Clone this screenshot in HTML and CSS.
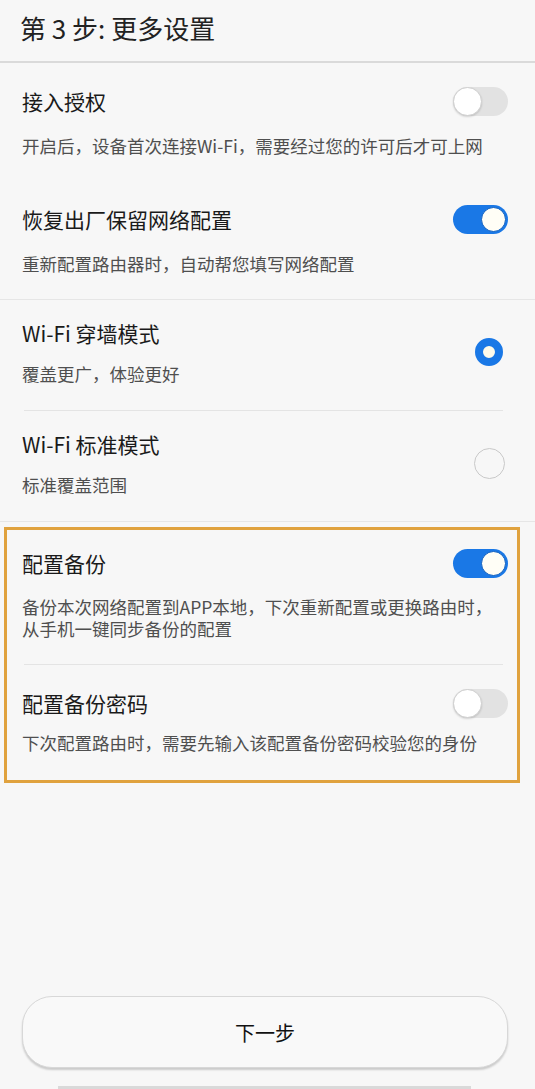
FILE: index.html
```html
<!DOCTYPE html>
<html lang="zh-CN">
<head>
<meta charset="utf-8">
<title>第 3 步: 更多设置</title>
<link rel="stylesheet" href="styles.css">
</head>
<body>
<div class="page">
  <header class="header">
    <h1>第 3 步: 更多设置</h1>
  </header>

  <section class="group">
    <div class="row">
      <div class="title">接入授权</div>
      <div class="ctrl"><span class="switch off"><span class="knob"></span></span></div>
      <div class="desc">开启后，设备首次连接Wi-Fi，需要经过您的许可后才可上网</div>
    </div>
    <div class="row">
      <div class="title">恢复出厂保留网络配置</div>
      <div class="ctrl"><span class="switch on"><span class="knob"></span></span></div>
      <div class="desc">重新配置路由器时，自动帮您填写网络配置</div>
    </div>
  </section>

  <section class="group radios">
    <div class="row radio-row">
      <div class="title">Wi-Fi 穿墙模式</div>
      <div class="ctrl"><span class="radio checked"></span></div>
      <div class="desc">覆盖更广，体验更好</div>
    </div>
    <div class="sep"></div>
    <div class="row radio-row">
      <div class="title">Wi-Fi 标准模式</div>
      <div class="ctrl"><span class="radio"></span></div>
      <div class="desc">标准覆盖范围</div>
    </div>
  </section>

  <section class="box">
    <div class="row">
      <div class="title">配置备份</div>
      <div class="ctrl"><span class="switch on"><span class="knob"></span></span></div>
      <div class="desc">备份本次网络配置到APP本地，下次重新配置或更换路由时，<br>从手机一键同步备份的配置</div>
    </div>
    <div class="sep"></div>
    <div class="row">
      <div class="title">配置备份密码</div>
      <div class="ctrl"><span class="switch off"><span class="knob"></span></span></div>
      <div class="desc">下次配置路由时，需要先输入该配置备份密码校验您的身份</div>
    </div>
  </section>

  <footer class="footer">
    <button class="next" type="button">下一步</button>
    <div class="navhint"></div>
  </footer>
</div>
</body>
</html>
```

FILE: styles.css
```css
html, body {
  margin: 0;
  padding: 0;
  background: #f7f7f7;
}

body {
  font-family: "Noto Sans CJK SC", "Noto Sans", sans-serif;
  color: #1c1c1c;
}

.page {
  min-height: 1089px;
  display: flex;
  flex-direction: column;
}

.header {
  padding: 10px 20px 15px;
  border-bottom: 2px solid #dadada;
}

.header h1 {
  margin: 0;
  font-size: 26px;
  line-height: 36px;
  font-weight: 400;
  color: #222;
}

.group {
  border-bottom: 1px solid #e6e6e6;
}

.row {
  display: grid;
  grid-template-columns: 1fr auto;
  padding: 24px 27px 24px 22px;
}

.title {
  grid-column: 1;
  grid-row: 1;
  font-size: 21px;
  line-height: 28px;
  color: #1a1a1a;
}

.ctrl {
  grid-column: 2;
  grid-row: 1;
  align-self: center;
  display: flex;
  justify-content: center;
}

.desc {
  grid-column: 1 / span 2;
  grid-row: 2;
  margin-top: 19px;
  font-size: 17.5px;
  line-height: 22px;
  color: #4f4f4f;
}

.radio-row {
  padding: 19px 30px 25px 22px;
}

.radio-row .desc {
  grid-column: 1;
  margin-top: 16px;
}

.radio-row .ctrl {
  grid-row: 1 / span 2;
  width: 32px;
}

.sep {
  height: 1px;
  background: #e4e4e4;
  margin: 0 32px 0 24px;
}

/* switches */
.switch {
  display: flex;
  align-items: center;
  box-sizing: border-box;
  width: 55px;
  height: 29px;
  border-radius: 15px;
}

.switch.on {
  background: #1a78e6;
  justify-content: flex-end;
  padding-right: 2px;
}

.switch.on .knob {
  width: 25px;
  height: 25px;
  box-sizing: border-box;
  border-radius: 50%;
  background: #fffef6;
  border: 1.5px solid #0f5fc0;
}

.switch.off {
  background: #e2e2e2;
  justify-content: flex-start;
}

.switch.off .knob {
  width: 29px;
  height: 29px;
  box-sizing: border-box;
  border-radius: 50%;
  background: #fff;
  border: 1px solid #cfcfcf;
  box-shadow: 0 1px 2px rgba(0, 0, 0, 0.15);
}

/* radios */
.radio {
  display: block;
  box-sizing: border-box;
  width: 31px;
  height: 31px;
  border-radius: 50%;
  border: 1.5px solid #c9c9c9;
  background: transparent;
}

.radio.checked {
  width: 28px;
  height: 28px;
  border: 8px solid #1a78e6;
  background: #fffbea;
}

/* highlighted box */
.box {
  margin: 5px 15px 0 4px;
  border: 3px solid #e0a23e;
}

.box .row {
  padding: 19px 9px 24px 15px;
}

.box .row .desc {
  margin-top: 18px;
}

.box .row:last-child {
  padding: 24px 9px 26px 15px;
}

.box .row:last-child .desc {
  margin-top: 14px;
}

.box .sep {
  margin: 0 14px 0 17px;
}

/* footer */
.footer {
  margin-top: auto;
  padding: 0 27px 0 22px;
}

.next {
  display: block;
  width: 100%;
  height: 72px;
  border: 1px solid #d8d8d8;
  border-radius: 30px;
  background: #f9f9f9;
  box-shadow: 0 2px 2px rgba(0, 0, 0, 0.18);
  font-family: "Noto Sans CJK SC", sans-serif;
  font-size: 20px;
  color: #111;
  padding: 0;
}

.navhint {
  margin: 18px 37px 0 36px;
  height: 3px;
  background: #d9d9d9;
}
```
